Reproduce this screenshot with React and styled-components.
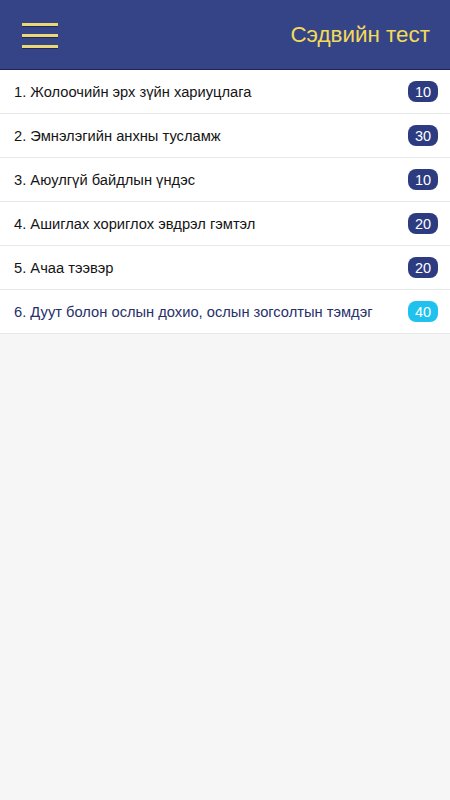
import React from "react";
import styled, { createGlobalStyle } from "styled-components";

const topics = [
    { id: 1, title: "Жолоочийн эрх зүйн хариуцлага", count: 10 },
    { id: 2, title: "Эмнэлэгийн анхны тусламж", count: 30 },
    { id: 3, title: "Аюулгүй байдлын үндэс", count: 10 },
    { id: 4, title: "Ашиглах хориглох эвдрэл гэмтэл", count: 20 },
    { id: 5, title: "Ачаа тээвэр", count: 20 },
    { id: 6, title: "Дуут болон ослын дохио, ослын зогсолтын тэмдэг", count: 40, active: true },
];

const App = () => {
    return (
        <>
            <GlobalStyle />
            <Page>
                <Header>
                    <Burger>
                        <span />
                        <span />
                        <span />
                    </Burger>
                    <Title>Сэдвийн тест</Title>
                </Header>
                <List>
                    {topics.map((t) =>
                        <Row key={t.id}>
                            <Label active={t.active}>{t.id}. {t.title}</Label>
                            <Badge active={t.active}>{t.count}</Badge>
                        </Row>
                    )}
                </List>
            </Page>
        </>
    );
};

export default App;

const GlobalStyle = createGlobalStyle`
    body {
        margin: 0;
        background: #f6f6f6;
        font-family: "Liberation Sans", Arial, sans-serif;
    }
`;

const Page = styled.div`
    width: 450px;
    min-height: 800px;
    background: #f6f6f6;
`;

const Header = styled.header`
    height: 70px;
    background: #354486;
    border-bottom: 1px solid #1b2456;
    display: flex;
    align-items: center;
    justify-content: space-between;
    padding: 0 20px 0 22px;
    box-sizing: border-box;
`;

const Burger = styled.div`
    width: 36px;
    display: flex;
    flex-direction: column;
    gap: 8px;
    margin-top: 1px;

    span {
        display: block;
        height: 3px;
        background: #e9d875;
        box-shadow: 0 1px 0 #22295a;
    }
`;

const Title = styled.div`
    color: #f2db5a;
    font-size: 22.4px;
    margin-top: 1px;
`;

const List = styled.ul`
    list-style-type: none;
    margin: 0;
    padding: 0;
    background: #fff;
`;

const Row = styled.li`
    height: 43px;
    display: flex;
    align-items: center;
    justify-content: space-between;
    padding: 0 12px 0 14px;
    border-bottom: 1px solid #e8e8e8;
`;

const Label = styled.span`
    font-size: 14.7px;
    color: ${({ active }) => active ? "#27306b" : "#151515"};
`;

const Badge = styled.span`
    min-width: 30px;
    height: 21px;
    box-sizing: border-box;
    border-radius: 8px;
    background: ${({ active }) => active ? "#1fc2ee" : "#2d3c80"};
    color: #fff;
    font-size: 14.5px;
    display: flex;
    align-items: center;
    justify-content: center;
`;
